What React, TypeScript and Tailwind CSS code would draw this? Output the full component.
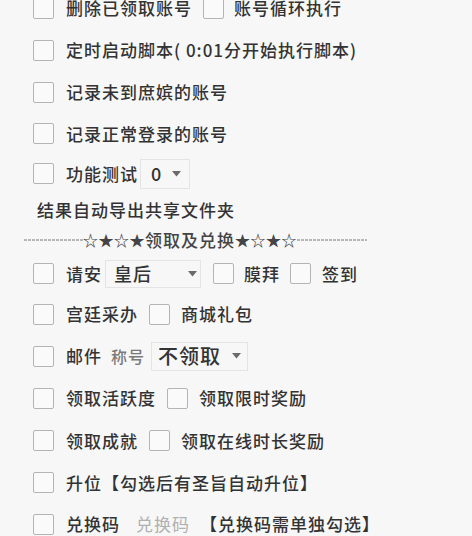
import React from "react";

const Box = ({ className = "" }: { className?: string }) => (
  <span className={`inline-block w-[21px] h-[21px] shrink-0 border-[1.5px] border-[#b4b4b4] rounded-[2px] bg-[#fafafa] ${className}`} />
);

const Arrow = () => (
  <svg width="9" height="6" viewBox="0 0 9 6" className="shrink-0">
    <path d="M0 0 L9 0 L4.5 5.5 Z" fill="#6b6b6b" />
  </svg>
);

const Dashes = ({ w }: { w: number }) => (
  <svg width={w} height="4" viewBox={`0 0 ${w} 4`} className="shrink-0">
    <line x1="0" y1="2" x2={w} y2="2" stroke="#777" strokeWidth="1" strokeDasharray="3 1" />
  </svg>
);

const Row = ({ h = "h-[42px]", children }: { h?: string; children: React.ReactNode }) => (
  <div className={`flex items-center ${h} pl-[33px]`}>{children}</div>
);

const T = ({ children, className = "" }: { children: React.ReactNode; className?: string }) => (
  <span className={`whitespace-nowrap ${className}`}>{children}</span>
);

export default function App() {
  return (
    <div
      className="w-[472px] h-[536px] overflow-hidden bg-[#f7f7f7] text-[#333] text-[17px] tracking-[1px] font-medium"
      style={{ fontFamily: '"Noto Sans CJK SC", "Noto Sans", sans-serif' }}
    >
      <div className="-mt-[13px]">
        <Row h="h-[42px]">
          <Box />
          <T className="ml-[12px]">删除已领取账号</T>
          <Box className="ml-[11px]" />
          <T className="ml-[10px]">账号循环执行</T>
        </Row>
        <Row h="h-[42px]">
          <Box />
          <T className="ml-[12px]">定时启动脚本( 0:01分开始执行脚本)</T>
        </Row>
        <Row>
          <Box />
          <T className="ml-[12px]">记录未到庶嫔的账号</T>
        </Row>
        <Row h="h-[41px]">
          <Box />
          <T className="ml-[12px]">记录正常登录的账号</T>
        </Row>
        <Row h="h-[39px]">
          <Box />
          <T className="ml-[12px]">功能测试</T>
          <div className="ml-[2px] flex items-center w-[50px] h-[30px] border border-[#e4e4e4] pl-[10px] pr-[8px] justify-between">
            <span className="text-[18px] tracking-normal">0</span>
            <Arrow />
          </div>
        </Row>
        <div className="flex items-center h-[33px] pl-[37px]">
          <T>结果自动导出共享文件夹</T>
        </div>
        <div className="flex items-center h-[28px] pl-[24px] text-[#444]">
          <Dashes w={59} />
          <T className="text-[15px] tracking-[0.5px]">☆★☆★</T>
          <T className="tracking-[1px]">领取及兑换</T>
          <T className="text-[15px] tracking-[0.5px]">★☆★☆</T>
          <Dashes w={70} />
        </div>
        <Row h="h-[39px]">
          <Box />
          <T className="ml-[12px]">请安</T>
          <div className="ml-[3px] flex items-center w-[96px] h-[28px] border border-[#e4e4e4] pl-[8px] pr-[3px] justify-between">
            <span className="text-[18px]">皇后</span>
            <Arrow />
          </div>
          <Box className="ml-[12px]" />
          <T className="ml-[10px]">膜拜</T>
          <Box className="ml-[10px]" />
          <T className="ml-[11px]">签到</T>
        </Row>
        <Row>
          <Box />
          <T className="ml-[12px]">宫廷采办</T>
          <Box className="ml-[11px]" />
          <T className="ml-[11px]">商城礼包</T>
        </Row>
        <Row>
          <Box />
          <T className="ml-[12px]">邮件</T>
          <T className="ml-[9px] text-[#7a7a7a] text-[16px]">称号</T>
          <div className="ml-[6px] flex items-center w-[97px] h-[29px] border border-[#e4e4e4] pl-[6px] pr-[6px] justify-between">
            <span className="text-[20px] tracking-[1px] text-[#333]">不领取</span>
            <Arrow />
          </div>
        </Row>
        <Row>
          <Box />
          <T className="ml-[12px]">领取活跃度</T>
          <Box className="ml-[11px]" />
          <T className="ml-[11px]">领取限时奖励</T>
        </Row>
        <Row h="h-[43px]">
          <Box />
          <T className="ml-[12px]">领取成就</T>
          <Box className="ml-[11px]" />
          <T className="ml-[11px]">领取在线时长奖励</T>
        </Row>
        <Row h="h-[41px]">
          <Box />
          <T className="ml-[12px]">升位【勾选后有圣旨自动升位】</T>
        </Row>
        <Row>
          <Box />
          <T className="ml-[12px]">兑换码</T>
          <T className="ml-[16px] text-[#b0b0b0] font-normal">兑换码</T>
          <T className="ml-[10px]">【兑换码需单独勾选】</T>
        </Row>
      </div>
    </div>
  );
}
